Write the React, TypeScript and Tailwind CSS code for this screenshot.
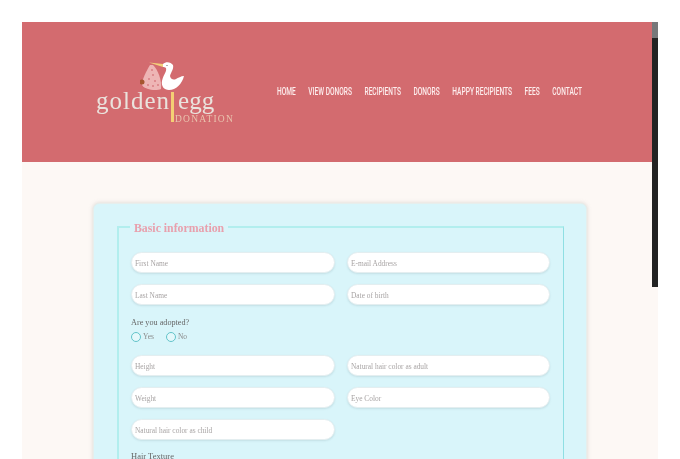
const NAV = ['HOME', 'VIEW DONORS', 'RECIPIENTS', 'DONORS', 'HAPPY RECIPIENTS', 'FEES', 'CONTACT'];

function Field({ placeholder }: { placeholder: string }) {
  return (
    <input
      placeholder={placeholder}
      className="h-[21px] w-full rounded-full border border-[#e4eef0] bg-white px-[3px] pt-[1px] text-[7.4px] shadow-[0_1px_2px_rgba(120,150,160,0.22)] outline-none placeholder:text-[#a8a4a4]"
    />
  );
}

function Radio({ label }: { label: string }) {
  return (
    <label className="flex items-center gap-[2px] text-[7.5px] text-[#8a8a8a]">
      <span className="h-[10px] w-[10px] rounded-full border border-[#62c4ca] bg-[#e4f8fb]" />
      {label}
    </label>
  );
}

function Logo() {
  return (
    <div className="relative h-[72px] w-[181px] shrink-0 font-['Liberation_Serif',serif]">
      <svg className="absolute left-[44px] top-[3px] h-[46px] w-[50px]" viewBox="0 0 50 46">
        {/* bundle */}
        <path d="M10 6 C6 13 2 20 2 26 C5 31 16 32 21 30 C22 21 18 11 13 6 Z" fill="#eeb5b5" />
        <g fill="#d97f85">
          <circle cx="9" cy="20" r="1" /><circle cx="13" cy="16" r="1" /><circle cx="15" cy="22" r="1" />
          <circle cx="8" cy="26" r="1" /><circle cx="13" cy="27" r="1" /><circle cx="18" cy="26" r="1" />
          <circle cx="12" cy="11" r="1" />
        </g>
        <circle cx="2" cy="23" r="2.5" fill="#a5562f" />
        {/* beak */}
        <path d="M9 3.5 L23 5 L23 8 Z" fill="#f3d27a" />
        {/* stork */}
        <path
          d="M23 5 C26 2 31 3 33 6 C34 10 31 13 30 17 C31 21 34 21 36 20 C38 19 41 17 44 17 C42 25 36 31 29 31 C24 31 21 27 22 22 C23 16 27 13 26 9 C25 8 24 8 23 8 Z"
          fill="#ffffff"
        />
        <circle cx="27" cy="6.5" r="0.6" fill="#555" />
      </svg>
      <div className="absolute left-0 top-[27px] flex items-baseline text-[25px] leading-[36px] text-[#eae3dd]">
        <span className="tracking-[1px]">golden</span>
        <span className="w-[8px]" />
        <span>egg</span>
      </div>
      <span className="absolute left-[75px] top-[36px] h-[30px] w-[2.5px] bg-[#f4cf74]" />
      <span className="absolute left-[79px] top-[57px] text-[9.5px] leading-[12px] tracking-[1.25px] text-[#e9c3ae]">DONATION</span>
    </div>
  );
}

export default function App() {
  return (
    <div className="h-[459px] w-[680px] overflow-hidden bg-white pl-[22px] pt-[22px]">
      <div className="relative h-[437px] w-[636px] overflow-hidden bg-[#fdf8f5] blur-[0.35px]">
        <header className="flex h-[140px] w-[630px] items-center bg-[#d36b6f] pl-[74px]">
          <Logo />
          <nav className="mt-[1px] flex origin-left scale-x-[0.6] gap-[21px] whitespace-nowrap font-['Roboto',sans-serif] text-[11px] font-medium text-[#fdeeee]">
            {NAV.map((item) => (
              <a key={item}>{item}</a>
            ))}
          </nav>
        </header>

        <div className="ml-[71px] mt-[41px] w-[494px] rounded-[6px] border border-[#e6eeec] bg-[#d9f5fa] pb-[30px] pl-[23px] pt-[12px] shadow-[0_0_4px_rgba(150,150,140,0.35)]">
          <fieldset className="w-[447px] border-2 border-r border-solid border-[#b2eeee] border-r-[#8fdfe3] pb-[20px] pl-[12px] font-['Liberation_Serif',serif]">
            <legend className="-ml-px px-[4px] pt-[4px] text-[11.8px] font-bold leading-[17px] text-[#e8a0ad]">Basic information</legend>
            <div className="mt-[15px] grid grid-cols-[204px_203px] gap-x-[12px] gap-y-[11px]">
              <Field placeholder="First Name" />
              <Field placeholder="E-mail Address" />
              <Field placeholder="Last Name" />
              <Field placeholder="Date of birth" />
            </div>
            <p className="mt-[12px] text-[8.2px] leading-[12px] text-[#666]">Are you adopted?</p>
            <div className="mt-[2px] flex gap-[12px]">
              <Radio label="Yes" />
              <Radio label="No" />
            </div>
            <div className="mt-[13px] grid grid-cols-[204px_203px] gap-x-[12px] gap-y-[11px]">
              <Field placeholder="Height" />
              <Field placeholder="Natural hair color as adult" />
              <Field placeholder="Weight" />
              <Field placeholder="Eye Color" />
              <Field placeholder="Natural hair color as child" />
            </div>
            <p className="mt-[10px] text-[8.5px] leading-[12px] text-[#666]">Hair Texture</p>
          </fieldset>
        </div>

        {/* scrollbar */}
        <div className="absolute right-0 top-0 h-[265px] w-[6px] bg-[#232323]">
          <div className="h-[16px] bg-[#77787a]" />
        </div>
      </div>
    </div>
  );
}
